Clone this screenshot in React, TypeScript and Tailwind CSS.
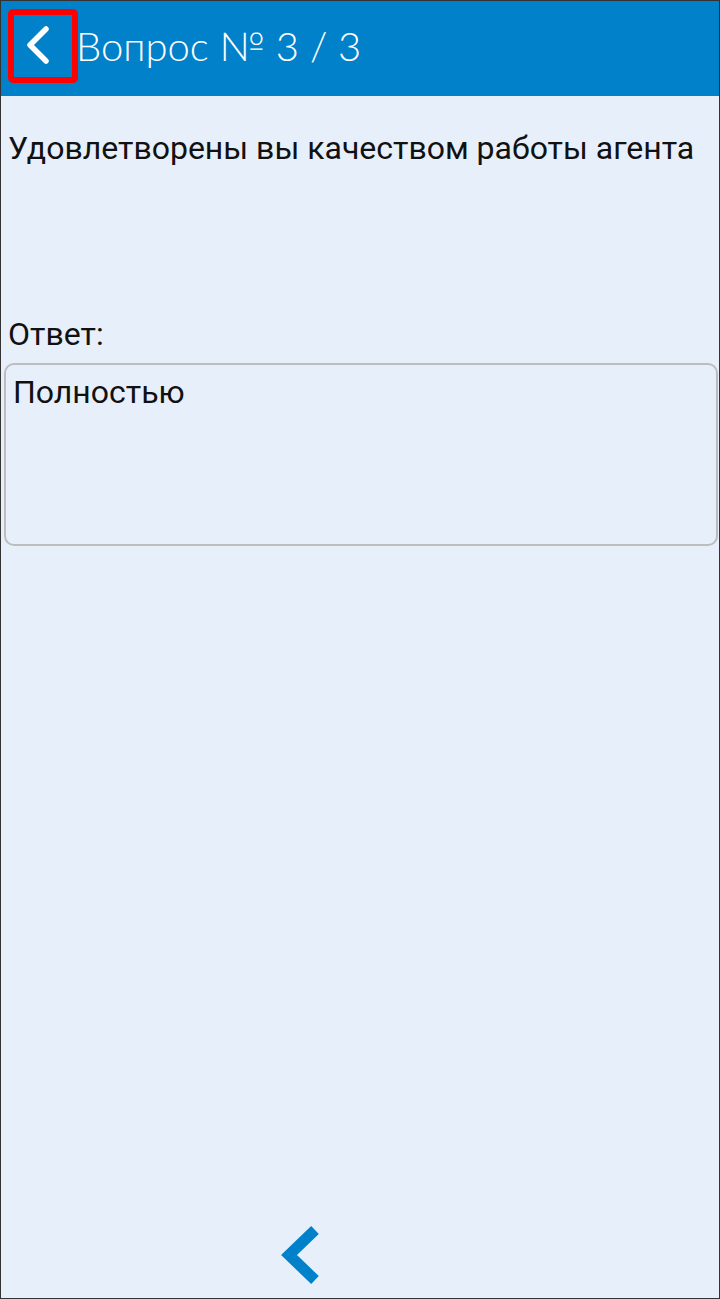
import React from "react";

export default function App() {
  return (
    <div className="w-[720px] h-[1299px] border border-[#333333] bg-[#e7effb] flex flex-col overflow-hidden">
      <header className="h-[95px] shrink-0 bg-[#0081c9] flex items-center">
        <button className="ml-[7px] mt-[-6px] w-[70px] h-[74px] border-[6px] border-[#ff0000] rounded-[5px] flex items-center justify-center">
          <svg width="34" height="42" viewBox="0 0 34 42" fill="none">
            <path d="M20 4 L4 20 L20 36" stroke="white" strokeWidth="5.5" strokeLinecap="round" strokeLinejoin="round" />
          </svg>
        </button>
        <h1
          className="ml-[-2px] mt-[-6px] text-white text-[40px] font-light"
          style={{ fontFamily: "Lato, 'DejaVu Sans', sans-serif" }}
        >
          Вопрос № 3 / 3
        </h1>
      </header>
      <main className="flex-1 flex flex-col pl-[3px] pr-[1px]" style={{ fontFamily: "Roboto, 'Liberation Sans', sans-serif" }}>
        <p className="mt-[34px] ml-[4px] text-[32px] leading-[37px] text-[#111111]">
          Удовлетворены вы качеством работы агента
        </p>
        <p className="mt-[149px] ml-[4px] text-[32px] leading-[37px] text-[#111111]">Ответ:</p>
        <div className="mt-[10px] h-[183px] border-2 border-[#bdbdbd] rounded-[10px] pt-[9px] px-[7px]">
          <span className="text-[32px] leading-[37px] text-[#111111]">Полностью</span>
        </div>
        <div className="mt-auto mb-[12px] flex justify-start">
          <svg width="44" height="60" viewBox="0 0 44 60" className="ml-[275px]">
            <path d="M36 4 L10 29 L36 54" stroke="#0081c9" strokeWidth="11" fill="none" strokeLinejoin="miter" />
          </svg>
        </div>
      </main>
    </div>
  );
}
